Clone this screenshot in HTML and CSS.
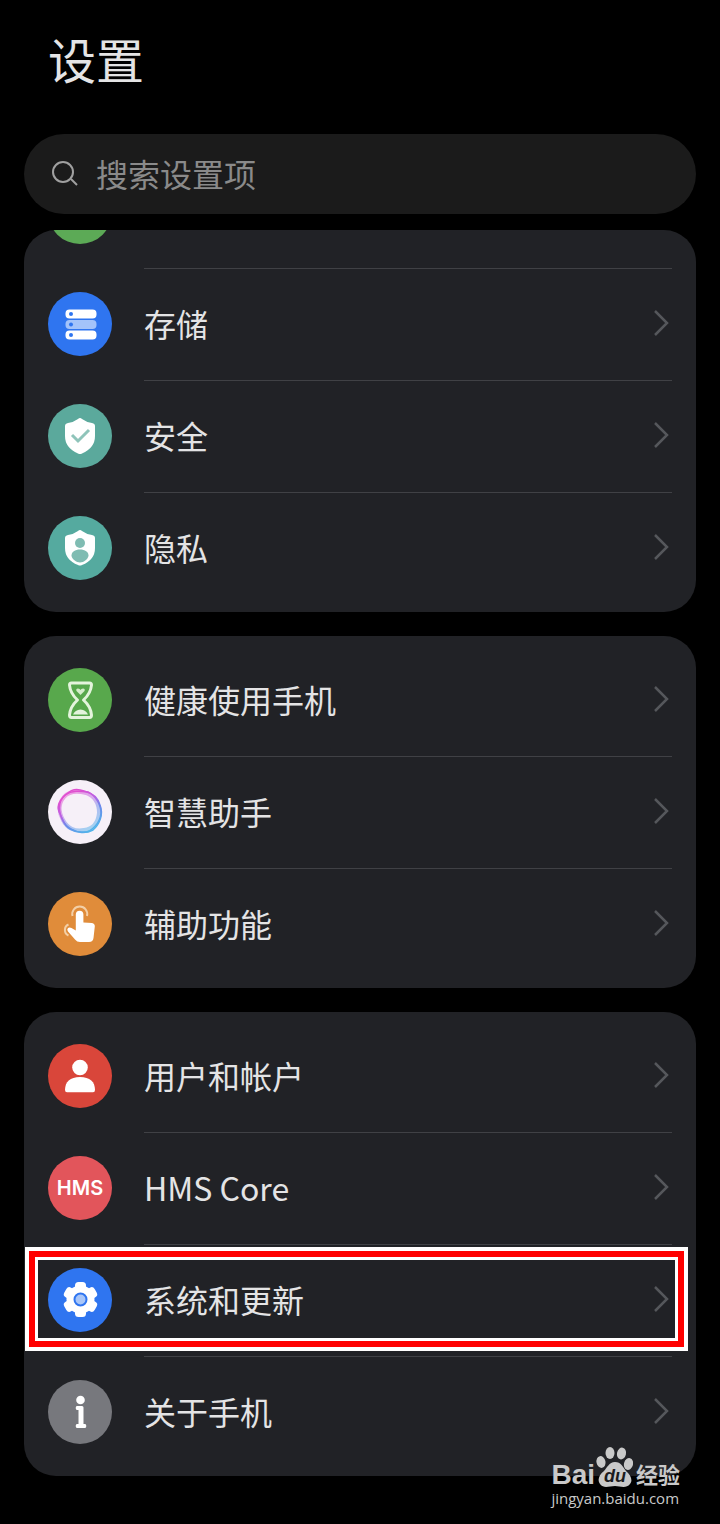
FILE: index.html
```
<!DOCTYPE html>
<html lang="zh-CN">
	<head>
		<meta charset="UTF-8">
		<meta name="viewport" content="width=device-width, initial-scale=1.0">
		<title>设置</title>
		<link rel="stylesheet" href="styles.css">
	</head>
	<body>
		<!-- 箭头图标，每行共用 -->
		<svg class="defs" width="0" height="0" aria-hidden="true">
			<symbol id="arrow" viewBox="0 0 24 32">
				<path d="M7 4L19 16L7 28" fill="none" stroke="currentColor" stroke-width="2.5" />
			</symbol>
		</svg>

		<main class="page">
			<h1 class="title">设置</h1>

			<label class="search">
				<svg class="search-icon" viewBox="0 0 32 32" aria-hidden="true">
					<circle cx="15" cy="15" r="10" />
					<path d="M23 22L29 28" />
				</svg>
				<input type="search" placeholder="搜索设置项" aria-label="搜索设置项">
			</label>

			<!-- 第一组，顶部一行被滚动遮住 -->
			<nav class="card">
				<div class="row cut">
					<svg class="icon" viewBox="0 0 64 64" aria-hidden="true">
						<circle cx="32" cy="32" r="32" fill="#5caa56" />
					</svg>
				</div>
				<a class="row" href="#storage">
					<svg class="icon" viewBox="0 0 64 64" aria-hidden="true">
						<circle cx="32" cy="32" r="32" fill="#2f75f0" />
						<rect x="17.5" y="17.5" width="31" height="9" rx="4" fill="#fff" />
						<rect x="17.5" y="28" width="31" height="9" rx="4" fill="#a3c3fa" />
						<rect x="17.5" y="38.5" width="31" height="9" rx="4" fill="#fff" />
						<g fill="#2f75f0">
							<circle cx="23" cy="22" r="2" />
							<circle cx="23" cy="32.5" r="2" />
							<circle cx="23" cy="43" r="2" />
						</g>
					</svg>
					<span class="body">存储<svg class="arrow"><use href="#arrow" /></svg></span>
				</a>
				<a class="row" href="#security">
					<svg class="icon" viewBox="0 0 64 64" aria-hidden="true">
						<circle cx="32" cy="32" r="32" fill="#5ba99c" />
						<path d="M32 14Q33 14 34 15Q38 18 44 19Q47 19.5 47 22V32Q47 44 34 49.5Q32 50.5 30 49.5Q17 44 17 32V22Q17 19.5 20 19Q26 18 30 15Q31 14 32 14Z" fill="#fff" />
						<path d="M24 31L30 37L41 26" fill="none" stroke="#8fc4ba" stroke-width="3" />
					</svg>
					<span class="body">安全<svg class="arrow"><use href="#arrow" /></svg></span>
				</a>
				<a class="row" href="#privacy">
					<svg class="icon" viewBox="0 0 64 64" aria-hidden="true">
						<circle cx="32" cy="32" r="32" fill="#55aa9f" />
						<path d="M32 14Q33 14 34 15Q38 18 44 19Q47 19.5 47 22V32Q47 44 34 49Q32 50 30 49Q17 44 17 32V22Q17 19.5 20 19Q26 18 30 15Q31 14 32 14Z" fill="#fff" />
						<circle cx="32" cy="27" r="5" fill="#7fbcb2" />
						<path d="M32 33.5C37 33.5 40.5 36 40.5 39.5C40.5 43 35.5 46.5 32 46.5C28.5 46.5 23.5 43 23.5 39.5C23.5 36 27 33.5 32 33.5Z" fill="#7fbcb2" />
					</svg>
					<span class="body">隐私<svg class="arrow"><use href="#arrow" /></svg></span>
				</a>
			</nav>

			<!-- 第二组 -->
			<nav class="card">
				<a class="row" href="#health">
					<svg class="icon" viewBox="0 0 64 64" aria-hidden="true">
						<circle cx="32" cy="32" r="32" fill="#58a84c" />
						<path d="M23.5 15H41.5Q43.5 15 43.5 17C43 23 41 27 35.5 32C41 37 43 41 43.5 47Q43.5 49.5 41.5 49.5H23.5Q21.5 49.5 21.5 47C22 41 24 37 29.5 32C24 27 22 23 21.5 17Q21.5 15 23.5 15Z" fill="none" stroke="#e4f4dc" stroke-width="3" stroke-linejoin="round" />
						<path d="M32.5 27L28.5 23Q27.5 20.5 30 20.5Q32 20.5 32.5 22Q33 20.5 35 20.5Q37.5 20.5 36.5 23Z" fill="#d5edcb" />
						<path d="M25 46.5Q27 42 32.5 41.5Q38 42 40 46.5Z" fill="#e4f4dc" />
					</svg>
					<span class="body">健康使用手机<svg class="arrow"><use href="#arrow" /></svg></span>
				</a>
				<a class="row" href="#assistant">
					<svg class="icon" viewBox="0 0 64 64" aria-hidden="true">
						<defs>
							<linearGradient id="ring" x1="0.2" y1="0" x2="0.8" y2="1">
								<stop offset="0.1" stop-color="#e04fd0" />
								<stop offset="0.4" stop-color="#b862e4" />
								<stop offset="0.6" stop-color="#6c86ea" />
								<stop offset="1" stop-color="#4fb8ea" />
							</linearGradient>
						</defs>
						<circle cx="32" cy="32" r="32" fill="#f6f0f8" />
						<g fill="none" stroke="url(#ring)">
							<path d="M20 13C25 8 31 9 36 11C44 13 50 18 52 25C56 35 51 45 45 50C38 54 29 53 22 49C16 46 15 39 11 32C8 24 14 17 20 13Z" stroke-width="1.5" />
							<path d="M17 15C24 10 32 11 40 12C47 15 53 24 53 33C52 43 44 52 36 52C27 53 18 47 15 41C11 33 9 22 17 15Z" stroke-width="1.5" />
							<path d="M16 17C21 11 30 11 38 13C46 16 51 23 51 33C50 43 45 49 36 50C27 52 19 48 15 40C11 33 10 24 16 17Z" stroke-width="4" opacity="0.5" />
						</g>
					</svg>
					<span class="body">智慧助手<svg class="arrow"><use href="#arrow" /></svg></span>
				</a>
				<a class="row" href="#accessibility">
					<svg class="icon" viewBox="0 0 64 64" aria-hidden="true">
						<circle cx="32" cy="32" r="32" fill="#e08c3a" />
						<g fill="none" stroke="#f3cfa6" stroke-width="2">
							<path d="M24.5 24A7.5 7.5 0 1 1 39 24" />
							<path d="M20.500 32.500A6 6 0 0 0 20.500 43.500" />
						</g>
						<path d="M27.800 22.500A3.800 3.800 0 0 1 35.400 22.500V30.500L44 31Q47 31.500 46.800 34.500L45.500 46Q45 50 41 50H32Q29 50 27 47.500L20 39.500Q18.500 37.500 20 36Q21.500 34.800 23.500 36L27.800 38.500Z" fill="#fff" />
					</svg>
					<span class="body">辅助功能<svg class="arrow"><use href="#arrow" /></svg></span>
				</a>
			</nav>

			<!-- 第三组 -->
			<nav class="card">
				<a class="row" href="#account">
					<svg class="icon" viewBox="0 0 64 64" aria-hidden="true">
						<circle cx="32" cy="32" r="32" fill="#d9463a" />
						<circle cx="32" cy="23.5" r="7.8" fill="#fff" />
						<path d="M17 46C17 38 22 33 32 33C42 33 47 38 47 46Q47 48.3 45 48.3H19Q17 48.3 17 46Z" fill="#fff" />
					</svg>
					<span class="body">用户和帐户<svg class="arrow"><use href="#arrow" /></svg></span>
				</a>
				<a class="row" href="#hms">
					<svg class="icon" viewBox="0 0 64 64" aria-hidden="true">
						<circle cx="32" cy="32" r="32" fill="#e2555b" />
						<text class="hms" x="32" y="39" text-anchor="middle">HMS</text>
					</svg>
					<span class="body">HMS Core<svg class="arrow"><use href="#arrow" /></svg></span>
				</a>
				<a class="row active" href="#system">
					<svg class="icon" viewBox="0 0 64 64" aria-hidden="true">
						<circle cx="32" cy="32" r="32" fill="#2f75f0" />
						<g fill="#fff">
							<circle cx="32.5" cy="31.5" r="14" />
							<rect x="27" y="14" width="11" height="35" rx="3.5" />
							<rect x="27" y="14" width="11" height="35" rx="3.5" transform="rotate(60 32.5 31.5)" />
							<rect x="27" y="14" width="11" height="35" rx="3.5" transform="rotate(120 32.5 31.5)" />
						</g>
						<circle cx="32.5" cy="31.5" r="6" fill="#a9c6f8" stroke="#2f75f0" stroke-width="2" />
					</svg>
					<span class="body">系统和更新<svg class="arrow"><use href="#arrow" /></svg></span>
				</a>
				<a class="row" href="#about">
					<svg class="icon" viewBox="0 0 64 64" aria-hidden="true">
						<circle cx="32" cy="32" r="32" fill="#77787d" />
						<circle cx="32.5" cy="20" r="4.3" fill="#fff" />
						<path d="M29 26H34Q35.5 26 35.5 27.5V44H37Q38.3 44 38.3 46Q38.3 48 37 48H29Q27.7 48 27.7 46Q27.7 44 29 44H30.5V30H29Q27.7 30 27.7 28Q27.7 26 29 26Z" fill="#fff" />
					</svg>
					<span class="body">关于手机<svg class="arrow"><use href="#arrow" /></svg></span>
				</a>
			</nav>

			<!-- 水印 -->
			<div class="watermark">
				<div class="logo">
					<span class="bai">Bai</span>
					<svg class="paw" viewBox="0 0 38 42" aria-hidden="true">
						<g fill="#c9c9c9">
							<ellipse cx="6" cy="16" rx="4.5" ry="6" transform="rotate(-12 6 16)" />
							<ellipse cx="15" cy="7" rx="4.5" ry="6" />
							<ellipse cx="26.5" cy="7.5" rx="4.5" ry="6" transform="rotate(12 26.5 7.5)" />
							<ellipse cx="33.5" cy="18" rx="4.5" ry="6" transform="rotate(15 33.5 18)" />
							<path d="M20 16C26 16 28 21 31 25C36 29 38 35 35 38C31 43 25 40 20 40C14 40 9 43 5 38C2 34 4 29 9 25C12 22 14 16 20 16Z" />
						</g>
						<text class="du" x="20" y="36" text-anchor="middle">du</text>
					</svg>
					<span class="exp">经验</span>
				</div>
				<div class="url">jingyan.baidu.com</div>
			</div>
		</main>
	</body>
</html>
```
FILE: styles.css
```
* {
	margin: 0;
	padding: 0;
	box-sizing: border-box;
}

body {
	background-color: #000;
	color: #e4e4e5;
	font-family: "Noto Sans CJK SC", sans-serif;
	font-size: 32px;
}

.defs {
	position: absolute;
}

.page {
	position: relative;
	padding: 22px 24px 48px;
}

.title {
	padding: 0 24px;
	margin-bottom: 40px;
	font-size: 48px;
	font-weight: 400;
	line-height: 72px;
}

/* 搜索框 */
.search {
	display: flex;
	align-items: center;
	gap: 16px;
	height: 80px;
	padding: 0 24px 2px;
	margin-bottom: 16px;
	border-radius: 40px;
	background-color: #1b1b1b;
}

.search-icon {
	flex: none;
	width: 32px;
	height: 32px;
	fill: none;
	stroke: #a0a0a0;
	stroke-width: 2;
}

.search input {
	flex: 1;
	min-width: 0;
	border: none;
	outline: none;
	background: none;
	color: #e4e4e5;
	font: inherit;
}

.search input::placeholder {
	color: #8a8a8a;
}

/* 卡片 */
.card {
	padding: 8px 0;
	margin-bottom: 24px;
	border-radius: 32px;
	background-color: #212226;
	overflow: hidden;
}

.card:last-of-type {
	margin-bottom: 0;
}

.row {
	display: flex;
	align-items: center;
	gap: 32px;
	position: relative;
	height: 112px;
	padding: 0 24px;
	color: inherit;
	text-decoration: none;
}

/* 只露出底部的一行 */
.cut {
	align-items: flex-end;
	height: 38px;
	margin-top: -8px;
	padding-bottom: 24px;
}

.icon {
	flex: none;
	width: 64px;
	height: 64px;
}

.body {
	flex: 1;
	display: flex;
	align-items: center;
	justify-content: space-between;
	height: 100%;
	padding-bottom: 3px;
	border-top: 1px solid transparent;
}

.row + .row .body {
	border-top-color: #404145;
}

.arrow {
	width: 24px;
	height: 32px;
	color: #55575b;
}

.hms {
	font-family: Inter, sans-serif;
	font-size: 20px;
	font-weight: 600;
	fill: #fff;
}

/* 红框标注 */
.active::after {
	content: "";
	position: absolute;
	top: 7px;
	right: 12px;
	bottom: 9px;
	left: 5px;
	border: 6px solid #f00;
	box-shadow: 0 0 0 4px #fff, inset 0 0 0 3px #fff;
}

/* 水印 */
.watermark {
	position: absolute;
	right: 40px;
	bottom: 16px;
	color: #c9c9c9;
}

.logo {
	display: flex;
	align-items: flex-end;
	height: 42px;
}

.bai {
	font-family: "Liberation Sans", sans-serif;
	font-size: 28px;
	font-weight: 700;
	line-height: 26px;
}

.paw {
	width: 38px;
	height: 42px;
}

.du {
	font-family: "Liberation Sans", sans-serif;
	font-size: 18px;
	font-style: italic;
	font-weight: 700;
	fill: #1b1b1d;
}

.exp {
	margin-left: 3px;
	font-size: 22px;
	font-weight: 700;
	line-height: 30px;
}

.url {
	font-family: "Open Sans", sans-serif;
	font-size: 15px;
	line-height: 20px;
}
```
